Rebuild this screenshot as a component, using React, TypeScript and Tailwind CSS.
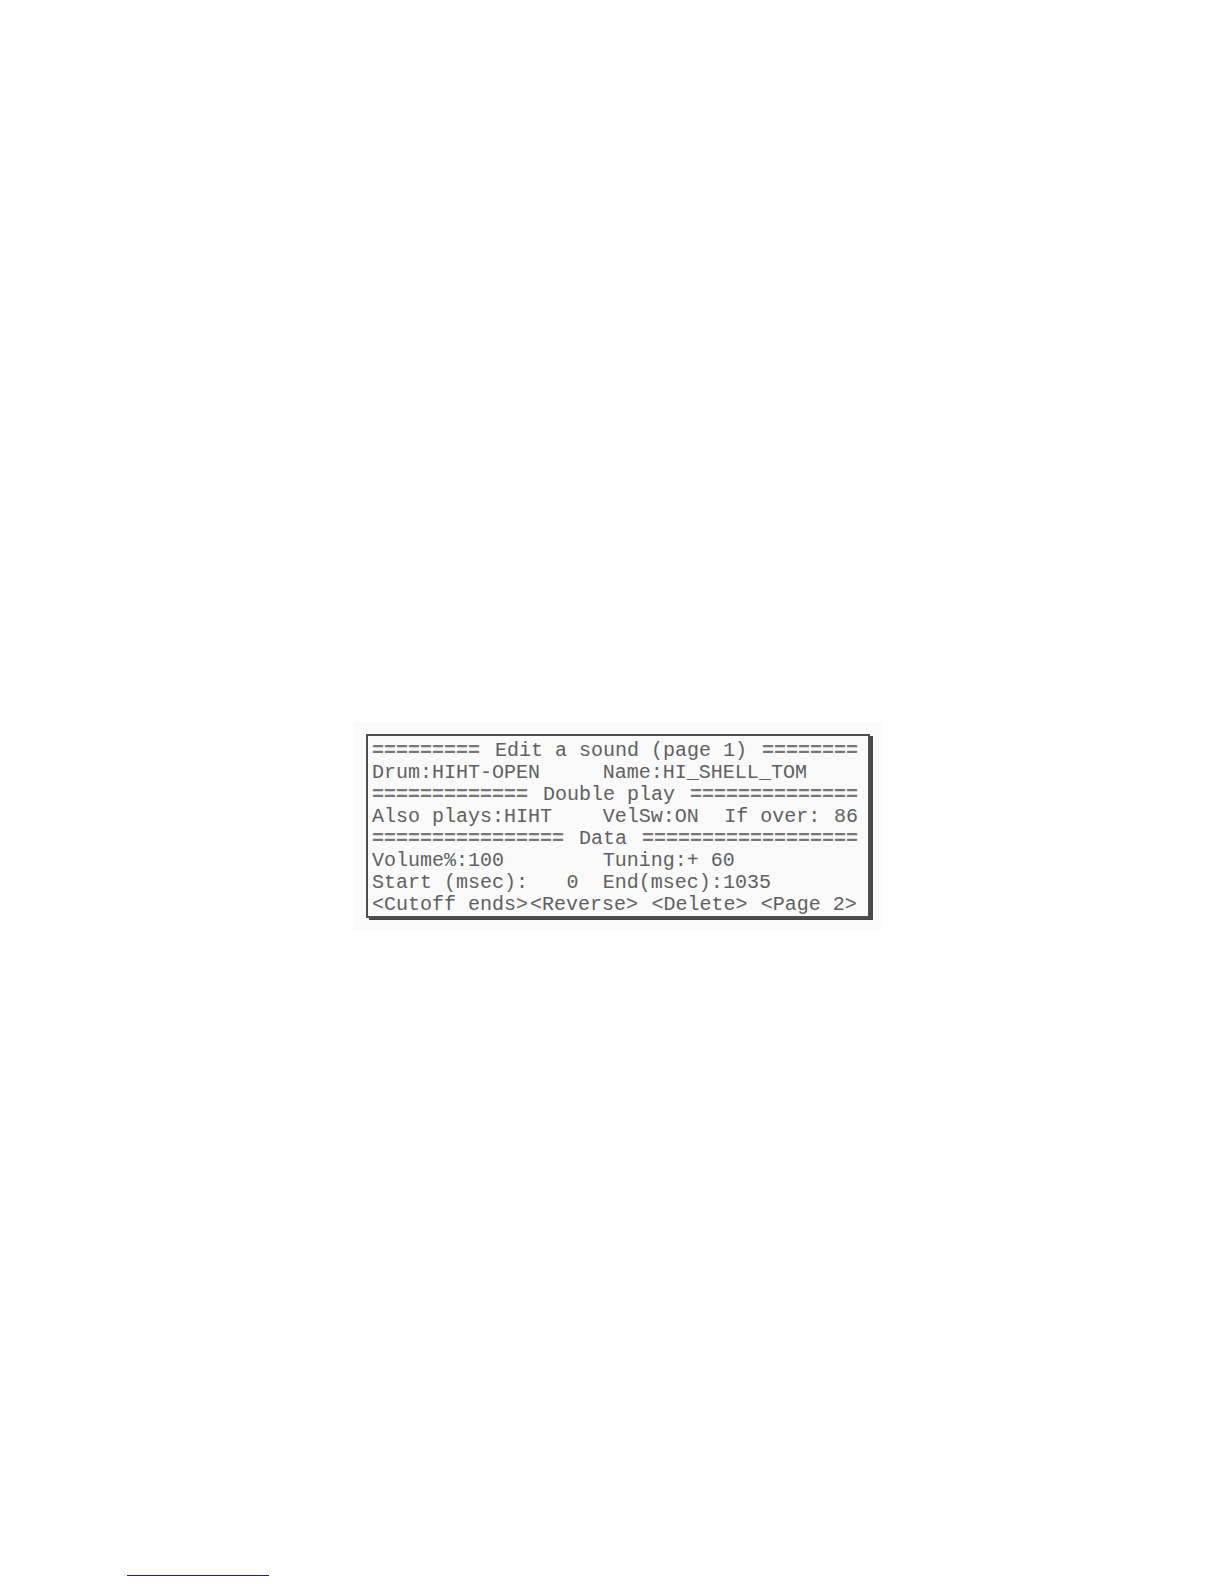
import type { ReactNode } from 'react';

interface RuleProps {
  left: string;
  title: string;
  right: string;
}

// Section heading with a run of "=" on both sides, 40 characters in all
function Rule({ left, title, right }: RuleProps) {
  return (
    <div className="flex justify-between">
      <span aria-hidden="true" className="font-bold text-[#777777]">{left}</span>
      <h2>{title}</h2>
      <span aria-hidden="true" className="font-bold text-[#777777]">{right}</span>
    </div>
  );
}

// One text row, laid out on the 40 character columns of the display
function Row({ children }: { children: ReactNode }) {
  return <div className="grid grid-cols-[repeat(40,minmax(0,1fr))]">{children}</div>;
}

interface FieldProps {
  id: string;
  label: string;
  value: string;
  className: string;
  align?: 'left' | 'right';
}

function Field({ id, label, value, className, align = 'left' }: FieldProps) {
  return (
    <div className={`flex whitespace-pre ${className}`}>
      <label htmlFor={id}>{label}</label>
      <input
        id={id}
        defaultValue={value}
        spellCheck={false}
        className={`h-[22px] w-0 min-w-0 flex-1 bg-transparent outline-none ${
          align === 'right' ? 'text-right' : 'text-left'
        }`}
      />
    </div>
  );
}

function Command({ children, className }: { children: string; className: string }) {
  return (
    <button type="button" className={`whitespace-nowrap text-left ${className}`}>
      {children}
    </button>
  );
}

export default function App() {
  return (
    <div className="flex min-h-screen flex-col bg-white">
      <main className="flex flex-1 items-center justify-center pt-[88px] pl-3">
        <div className="bg-[#fbfbfb] p-3">
          <form className="w-[504px] border-2 border-[#505050] bg-[#fafafa] pt-1 pr-[10px] pl-1 font-['Liberation_Mono',monospace] text-[20px] leading-[22px] text-[#606060] shadow-[3px_2px_0_#484848]">
            <Rule left="=========" title="Edit a sound (page 1)" right="========" />
            <Row>
              <Field id="drum" label="Drum:" value="HIHT-OPEN" className="col-span-17" />
              <Field id="name" label="Name:" value="HI_SHELL_TOM" className="col-start-20 col-end-41" />
            </Row>
            <Rule left="=============" title="Double play" right="==============" />
            <Row>
              <Field id="also" label="Also plays:" value="HIHT" className="col-span-17" />
              <Field id="velsw" label="VelSw:" value="ON" className="col-start-20 col-end-29" />
              <Field id="over" label="If over:" value="86" align="right" className="col-start-30 col-end-41" />
            </Row>
            <Rule left="================" title="Data" right="==================" />
            <Row>
              <Field id="volume" label="Volume%:" value="100" className="col-span-17" />
              <Field id="tuning" label="Tuning:" value="+ 60" className="col-start-20 col-end-41" />
            </Row>
            <Row>
              <Field id="start" label="Start (msec):" value="0" align="right" className="col-span-17" />
              <Field id="end" label="End(msec):" value="1035" className="col-start-20 col-end-41" />
            </Row>
            <Row>
              <Command className="col-span-13">&lt;Cutoff ends&gt;</Command>
              <Command className="col-span-9">&lt;Reverse&gt;</Command>
              <Command className="col-start-24 col-end-32">&lt;Delete&gt;</Command>
              <Command className="col-start-33 col-end-41">&lt;Page 2&gt;</Command>
            </Row>
          </form>
        </div>
      </main>
      <footer className="flex pb-2 pl-[127px]">
        <a href="#top" aria-label="Back to top" className="h-3 w-[142px] border-b border-[#1a1aa0]" />
      </footer>
    </div>
  );
}
